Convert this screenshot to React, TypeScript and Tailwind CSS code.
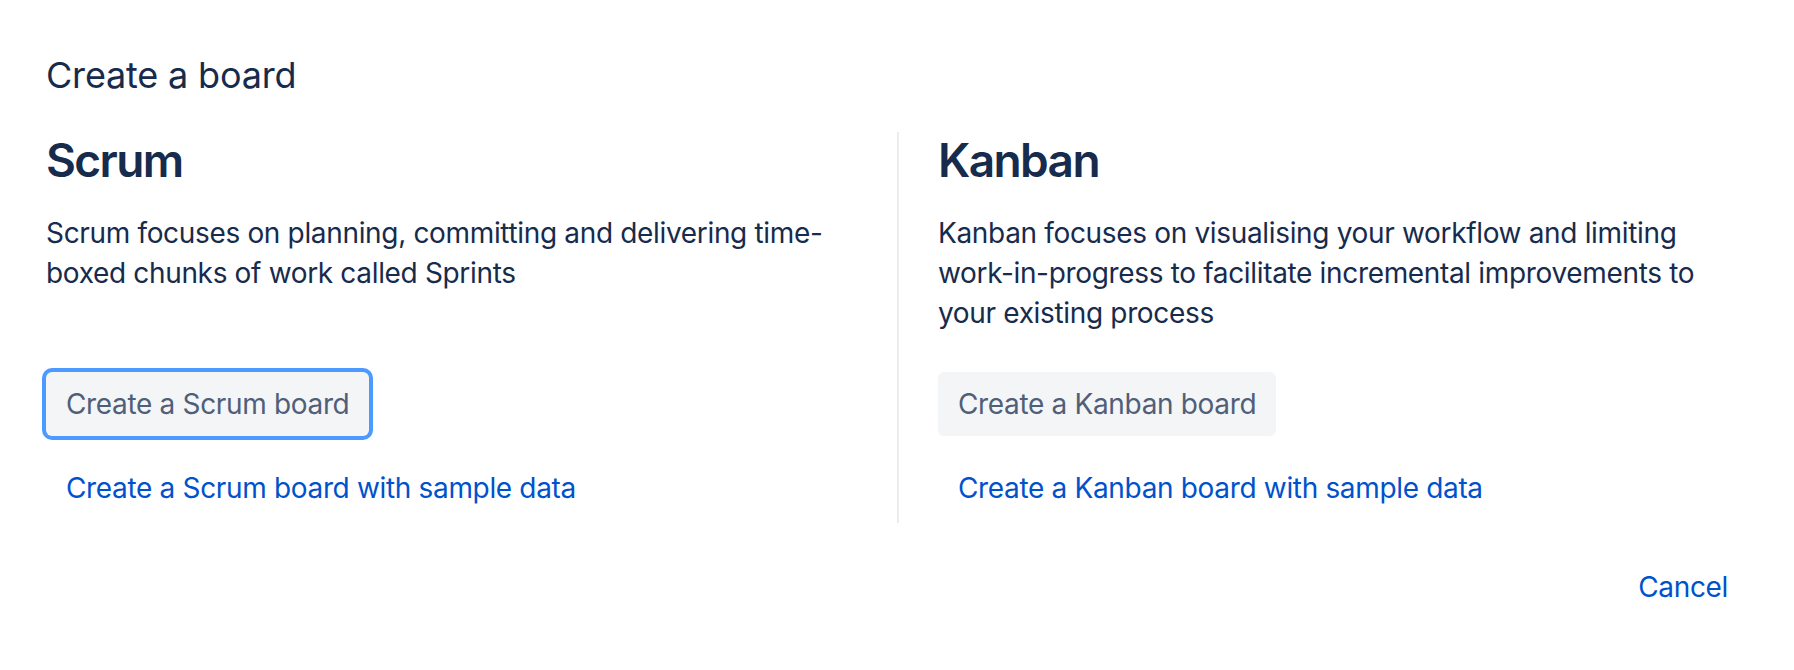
import type { ReactNode } from 'react';

type BoardOption = {
  title: string;
  description: string;
  createLabel: string;
  sampleLabel: string;
  focused?: boolean;
};

const options: BoardOption[] = [
  {
    title: 'Scrum',
    description: 'Scrum focuses on planning, committing and delivering time-boxed chunks of work called Sprints',
    createLabel: 'Create a Scrum board',
    sampleLabel: 'Create a Scrum board with sample data',
    focused: true,
  },
  {
    title: 'Kanban',
    description:
      'Kanban focuses on visualising your workflow and limiting work-in-progress to facilitate incremental improvements to your existing process',
    createLabel: 'Create a Kanban board',
    sampleLabel: 'Create a Kanban board with sample data',
  },
];

function LinkButton({ children }: { children: ReactNode }) {
  return (
    <button className="h-[64px] px-[20px] rounded-[6px] text-[28px] leading-[40px] tracking-[-0.012em] text-[#0052cc] hover:underline">
      {children}
    </button>
  );
}

function BoardColumn({ option, className }: { option: BoardOption; className?: string }) {
  return (
    <div className={className}>
      <h2 className="mt-[2px] text-[46px] leading-[52px] font-semibold tracking-[-0.035em]">{option.title}</h2>
      <p className="mt-[27px] min-h-[120px] text-[28px] leading-[40px] tracking-[-0.012em]">{option.description}</p>
      <div className="mt-[39px] flex flex-col items-start gap-[20px]">
        <button
          className={
            option.focused
              ? 'h-[64px] px-[20px] rounded-[6px] bg-[#f4f5f7] text-[28px] leading-[40px] tracking-[-0.012em] text-[#505f79] ring-4 ring-[#4c9aff]'
              : 'h-[64px] px-[20px] rounded-[6px] bg-[#f4f5f7] text-[28px] leading-[40px] tracking-[-0.012em] text-[#505f79]'
          }
        >
          {option.createLabel}
        </button>
        <LinkButton>{option.sampleLabel}</LinkButton>
      </div>
    </div>
  );
}

export default function App() {
  return (
    <div className="min-h-screen bg-white px-[46px] pt-[55px] font-['Inter',sans-serif] text-[#172b4d]">
      <h1 className="text-[36px] leading-[40px] font-normal tracking-[-0.005em]">Create a board</h1>

      <div className="mt-[37px] grid grid-cols-2">
        <BoardColumn option={options[0]} className="pr-[41px] pb-[3px]" />
        <BoardColumn option={options[1]} className="border-l-2 border-[#ebecf0] pl-[39px] pb-[3px]" />
      </div>

      <div className="mt-[32px] flex justify-end">
        <LinkButton>Cancel</LinkButton>
      </div>
    </div>
  );
}
